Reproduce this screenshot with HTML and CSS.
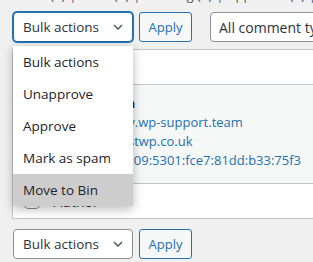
FILE: index.html
```html
<!DOCTYPE html>
<html>
<head>
<meta charset="utf-8">
<link rel="stylesheet" href="styles.css">
</head>
<body>
<div class="page">
  <ul class="views">
    <li>All (1)</li><li>|</li><li>Mine (0)</li><li>|</li><li>Pending (0)</li><li>|</li><li>Approved (1)</li><li>|</li><li>Spam (0)</li><li>|</li><li>Bin (0)</li>
  </ul>

  <div class="tablenav">
    <div class="select focused"><span>Bulk actions</span><svg class="chev" width="10" height="6" viewBox="0 0 10 6"><path d="M1 1l4 4 4-4" fill="none" stroke="#50575e" stroke-width="1.5"/></svg></div>
    <button class="btn">Apply</button>
    <div class="select types"><span>All comment types</span></div>
  </div>

  <table class="comments">
    <thead>
      <tr><td class="cb"><span class="checkbox"></span></td><th class="author">Author</th></tr>
    </thead>
    <tbody>
      <tr>
        <td class="cb"><span class="checkbox"></span></td>
        <td class="author">
          <strong class="name">Sean Jackson</strong>
          <a class="line">support@dev.wp-support.team</a>
          <a class="line">https://gobestwp.co.uk</a>
          <a class="line">2a00:23c7:5d09:5301:fce7:81dd:b33:75f3</a>
        </td>
      </tr>
    </tbody>
    <tfoot>
      <tr><td class="cb"><span class="checkbox checked"><svg width="14" height="14" viewBox="0 0 14 14"><path d="M3 7l3 3 5-6" fill="none" stroke="#2271b1" stroke-width="2"/></svg></span></td><th class="author">Author</th></tr>
    </tfoot>
  </table>

  <div class="tablenav bottom">
    <div class="select"><span>Bulk actions</span><svg class="chev" width="10" height="6" viewBox="0 0 10 6"><path d="M1 1l4 4 4-4" fill="none" stroke="#50575e" stroke-width="1.5"/></svg></div>
    <button class="btn">Apply</button>
  </div>

  <ul class="menu">
    <li>Bulk actions</li>
    <li>Unapprove</li>
    <li>Approve</li>
    <li>Mark as spam</li>
    <li class="hover">Move to Bin</li>
  </ul>
</div>
</body>
</html>
```

FILE: styles.css
```css
* { box-sizing: border-box; margin: 0; padding: 0; }
html, body {
  width: 313px;
  height: 262px;
  overflow: hidden;
  background: #f0f0f1;
}
body {
  font-family: "Open Sans", "Noto Sans", sans-serif;
  color: #2c3338;
  font-size: 13px;
}
.page {
  position: relative;
  display: flow-root;
  padding-left: 12px;
}
.views {
  list-style: none;
  display: flex;
  gap: 4px;
  margin-top: -13px;
  height: 16px;
  line-height: 16px;
  color: #50575e;
  padding-left: 20px;
  white-space: nowrap;
}
.tablenav {
  display: flex;
  align-items: center;
  height: 30px;
  margin-top: 9px;
}
.tablenav.bottom { margin-top: 10px; }
.select {
  width: 120px;
  height: 30px;
  margin-left: 1px;
  border: 1px solid #8c8f94;
  border-radius: 4px;
  background: #fff;
  display: flex;
  align-items: center;
  justify-content: space-between;
  padding: 0 9px 0 9px;
  font-size: 13.5px;
  color: #2c3338;
  white-space: nowrap;
  overflow: hidden;
  flex-shrink: 0;
}
.select.focused {
  border-color: #2271b1;
  box-shadow: 0 0 0 1px #2271b1;
}
.select.types {
  margin-left: 18px;
  width: 140px;
  padding-left: 8px;
  font-size: 14px;
}
.btn {
  margin-left: 6px;
  width: 53px;
  height: 30px;
  border: 1px solid #2271b1;
  border-radius: 3px;
  background: #f6f7f7;
  color: #2271b1;
  font-family: inherit;
  font-size: 13px;
  flex-shrink: 0;
}
.comments {
  margin-top: 7px;
  width: 420px;
  border-collapse: collapse;
  border: 1px solid #c3c4c7;
  background: #fff;
  font-size: 13px;
}
.comments td, .comments th {
  text-align: left;
  font-weight: normal;
  vertical-align: middle;
}
.comments thead td, .comments thead th {
  height: 35px;
  border-bottom: 1px solid #c3c4c7;
  font-size: 14px;
}
.comments tfoot td, .comments tfoot th {
  height: 35px;
  border-top: 1px solid #c3c4c7;
  font-size: 14px;
}
.comments tbody td {
  height: 99px;
  background: #f6f7f7;
  vertical-align: top;
  padding-top: 9px;
}
.cb {
  width: 41px;
  padding-left: 11px;
}
.checkbox {
  display: block;
  width: 16px;
  height: 16px;
  border: 1px solid #8c8f94;
  border-radius: 4px;
  background: #fff;
  position: relative;
}
.checkbox svg {
  position: absolute;
  left: 0;
  top: 0;
}
.author { padding-left: 0; }
.name, .line {
  display: block;
  line-height: 19px;
  white-space: nowrap;
}
.name { color: #1d2327; font-weight: 600; }
.line { color: #2271b1; }
.menu {
  position: absolute;
  left: 13px;
  top: 46px;
  width: 120px;
  background: #fff;
  list-style: none;
  font-size: 13.5px;
  color: #1d2327;
  box-shadow: 0 3px 10px rgba(0, 0, 0, 0.28);
}
.menu li {
  height: 32px;
  line-height: 32px;
  padding-left: 10px;
  white-space: nowrap;
}
.menu li.hover { background: #cdcdcd; }
```
